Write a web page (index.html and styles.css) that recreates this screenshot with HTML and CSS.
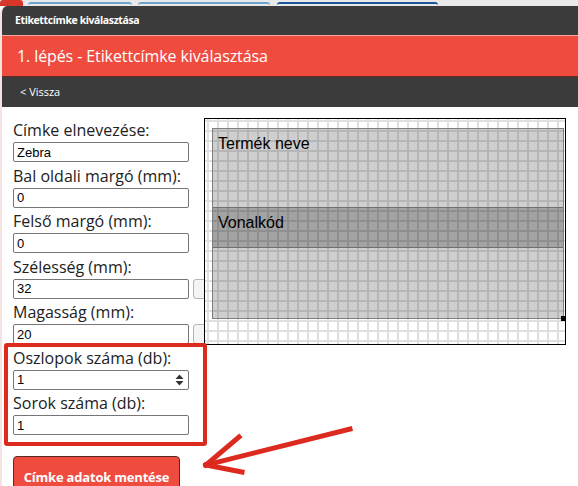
FILE: index.html
```html
<!DOCTYPE html>
<html lang="hu">
<head>
<meta charset="UTF-8">
<meta name="viewport" content="width=device-width, initial-scale=1.0">
<title>Etikettcímke kiválasztása</title>
<link rel="stylesheet" href="styles.css">
</head>
<body>
<div class="tabs">
    <div class="tab tab-red"></div>
    <div class="tab tab-one"></div>
    <div class="tab tab-two"></div>
    <div class="tab tab-active"></div>
</div>

<div class="dialog">
    <div class="dialog-title">Etikettcímke kiválasztása</div>
    <div class="step-bar">1. lépés - Etikettcímke kiválasztása</div>
    <div class="nav-bar">&lt; Vissza</div>

    <div class="content">
        <div class="form">
            <label class="field-label">Címke elnevezése:</label>
            <div class="field-row"><input type="text" value="Zebra"></div>

            <label class="field-label">Bal oldali margó (mm):</label>
            <div class="field-row"><input type="text" value="0"></div>

            <label class="field-label">Felső margó (mm):</label>
            <div class="field-row"><input type="text" value="0"></div>

            <label class="field-label">Szélesség (mm):</label>
            <div class="field-row"><input type="text" value="32"><span class="stub"></span></div>

            <label class="field-label">Magasság (mm):</label>
            <div class="field-row"><input type="text" value="20"><span class="stub"></span></div>

            <label class="field-label">Oszlopok száma (db):</label>
            <div class="field-row">
                <div class="spin-input">
                    <span>1</span>
                    <svg class="spinner" width="9" height="12" viewBox="0 0 9 12">
                        <path d="M4.5 0.5 L8.5 5 L0.5 5 Z" fill="#333"/>
                        <path d="M4.5 11.5 L8.5 7 L0.5 7 Z" fill="#333"/>
                    </svg>
                </div>
            </div>

            <label class="field-label">Sorok száma (db):</label>
            <div class="field-row"><input type="text" value="1"></div>

            <button class="save-btn">Címke adatok mentése</button>
        </div>

        <div class="canvas">
            <div class="label-area">
                <div class="zone zone-name">Termék neve</div>
                <div class="zone zone-barcode">Vonalkód</div>
                <div class="zone zone-rest"></div>
                <span class="resize-handle"></span>
            </div>
        </div>
    </div>
</div>

<div class="bottom-line"></div>

<!-- annotation drawn over the screenshot -->
<div class="highlight-box"></div>
<svg class="arrow" width="578" height="486" viewBox="0 0 578 486">
    <g stroke="#dd2a1f" stroke-width="5" stroke-linecap="square" fill="none">
        <line x1="350" y1="429" x2="206" y2="465"/>
        <line x1="206" y1="465" x2="239" y2="437"/>
        <line x1="206" y1="465" x2="242" y2="472"/>
    </g>
</svg>
</body>
</html>
```

FILE: styles.css
```css
body {
    margin: 0;
    width: 578px;
    height: 486px;
    overflow: hidden;
    position: relative;
    background-color: #fff;
    font-family: "Open Sans", sans-serif;
}

.tabs {
    height: 6px;
    background-color: #e9e9e9;
    position: relative;
}

.tab {
    position: absolute;
    top: 2px;
    height: 4px;
    border-top: 2px solid #6fa3cc;
    border-radius: 3px 3px 0 0;
    box-sizing: border-box;
}

.tab-red {
    top: 0;
    left: 0;
    width: 23px;
    height: 6px;
    border: none;
    background-color: #d9362b;
}

.tab-one {
    left: 28px;
    width: 104px;
}

.tab-two {
    left: 138px;
    width: 132px;
}

.tab-active {
    left: 277px;
    width: 161px;
    border-top-color: #1b559d;
}

.dialog {
    background-color: #fff;
    border-radius: 7px 0 0 0;
    overflow: hidden;
    border-left: 2px solid #f4e3e1;
}

.dialog-title {
    height: 29px;
    line-height: 29px;
    background-color: #3b3b3b;
    color: #fff;
    font-size: 10.5px;
    font-weight: bold;
    padding-left: 13px;
    letter-spacing: -0.4px;
}

.step-bar {
    height: 40px;
    line-height: 40px;
    background-color: #ef4c3f;
    border-top: 1px solid #f7a89e;
    border-bottom: 1px solid #6a2a24;
    color: #fff;
    font-size: 16px;
    letter-spacing: -0.1px;
    padding-left: 15px;
}

.nav-bar {
    height: 30px;
    line-height: 30px;
    background-color: #3b3b3b;
    color: #fff;
    font-size: 11px;
    padding-left: 18px;
}

.content {
    display: flex;
    padding: 11px 0 0 11px;
}

.form {
    width: 191px;
    overflow: hidden;
    flex-shrink: 0;
}

.field-label {
    display: block;
    font-size: 16px;
    line-height: 24px;
    color: #222;
    white-space: nowrap;
}

.field-row {
    display: flex;
    gap: 4px;
    height: 20px;
    margin-bottom: 1.5px;
}

.field-row input,
.spin-input {
    width: 176px;
    height: 20px;
    box-sizing: border-box;
    margin: 0;
    border: 1px solid #767676;
    border-radius: 2px;
    padding: 0 3px;
    font-family: "Liberation Sans", Arial, sans-serif;
    font-size: 13px;
    color: #000;
    flex-shrink: 0;
}

.spin-input {
    display: flex;
    align-items: center;
    justify-content: space-between;
    padding-right: 4px;
}

.stub {
    width: 20px;
    height: 20px;
    box-sizing: border-box;
    border: 1px solid #b5b5b5;
    border-radius: 3px;
    background-color: #f4f4f4;
    flex-shrink: 0;
}

.save-btn {
    display: block;
    margin-top: 21px;
    width: 167px;
    height: 38px;
    background-color: #ef4c3f;
    border: 1px solid #5c2a26;
    border-radius: 4px;
    color: #fff;
    font-family: "Open Sans", sans-serif;
    font-size: 13px;
    font-weight: bold;
    letter-spacing: -0.2px;
    padding: 4px 0 0;
}

.canvas {
    width: 362px;
    height: 227px;
    border: 1px solid #000;
    flex-shrink: 0;
    padding: 9px 0 0 7px;
    box-sizing: border-box;
    background-color: #fff;
    background-image:
        linear-gradient(to right, #e0e0e0 2px, transparent 2px),
        linear-gradient(to bottom, #e0e0e0 2px, transparent 2px);
    background-size: 10px 10px;
    background-position: 2px 1px;
}

.label-area {
    width: 352px;
    height: 191px;
    position: relative;
    border: 1px solid #7e7e7e;
    box-sizing: border-box;
    display: flex;
    flex-direction: column;
}

.zone {
    font-family: "Liberation Sans", Arial, sans-serif;
    font-size: 16px;
    color: #000;
    padding: 6px 0 0 5px;
    box-sizing: border-box;
}

.zone-name {
    height: 79px;
    background-color: rgba(0, 0, 0, 0.19);
    border-bottom: 1px solid #707070;
}

.zone-barcode {
    height: 40px;
    background-color: rgba(0, 0, 0, 0.36);
    border-bottom: 1px solid #707070;
    padding-top: 6px;
}

.zone-rest {
    flex: 1;
    background-color: rgba(0, 0, 0, 0.19);
}

.resize-handle {
    position: absolute;
    right: -3px;
    bottom: -3px;
    width: 5px;
    height: 5px;
    background-color: #000;
}

.bottom-line {
    position: absolute;
    left: 0;
    bottom: 0;
    width: 578px;
    height: 3px;
    background-color: #dcdcdc;
    z-index: -1;
}

.highlight-box {
    position: absolute;
    left: 4px;
    top: 343px;
    width: 203px;
    height: 103px;
    box-sizing: border-box;
    border: 4px solid #dd2a1f;
    border-radius: 3px;
}

.arrow {
    position: absolute;
    left: 0;
    top: 0;
    pointer-events: none;
}
```
